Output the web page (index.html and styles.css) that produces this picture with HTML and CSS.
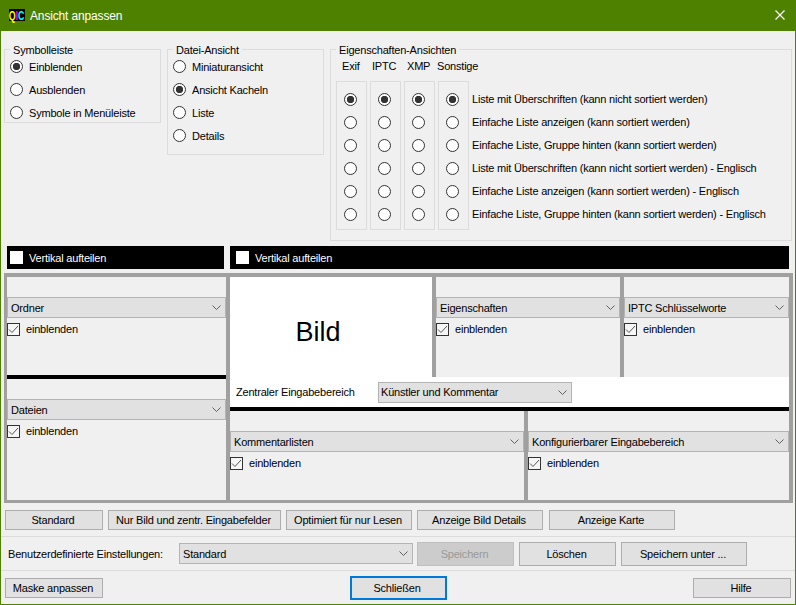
FILE: index.html
```html
<!DOCTYPE html>
<html lang="de">
<head>
    <meta charset="UTF-8">
    <meta name="viewport" content="width=device-width, initial-scale=1.0">
    <title>Ansicht anpassen</title>
    <link rel="stylesheet" href="styles.css">
</head>
<body>
<div class="window">
    <div class="titlebar">
        <span class="logo"><span class="logo-text"><span class="q">Q</span><span class="i">I</span><span class="c">C</span></span></span>
        <span class="title">Ansicht anpassen</span>
        <svg class="close" width="10" height="10" viewBox="0 0 10 10"><path d="M0.5 0.5L9.5 9.5M9.5 0.5L0.5 9.5" stroke="#fff" stroke-width="1.2" fill="none"/></svg>
    </div>

    <div class="views">
        <fieldset class="group group-toolbar">
            <legend>Symbolleiste</legend>
            <label class="opt"><input type="radio" name="tb" checked>Einblenden</label>
            <label class="opt"><input type="radio" name="tb">Ausblenden</label>
            <label class="opt"><input type="radio" name="tb">Symbole in Menüleiste</label>
        </fieldset>
        <fieldset class="group group-files">
            <legend>Datei-Ansicht</legend>
            <label class="opt"><input type="radio" name="fv">Miniaturansicht</label>
            <label class="opt"><input type="radio" name="fv" checked>Ansicht Kacheln</label>
            <label class="opt"><input type="radio" name="fv">Liste</label>
            <label class="opt"><input type="radio" name="fv">Details</label>
        </fieldset>
        <fieldset class="group group-props">
            <legend>Eigenschaften-Ansichten</legend>
            <div class="prop-heads">
                <span class="head-exif">Exif</span>
                <span class="head-iptc">IPTC</span>
                <span class="head-xmp">XMP</span>
                <span>Sonstige</span>
            </div>
            <div class="prop-table">
                <div class="prop-col">
                    <input type="radio" name="exif" checked><input type="radio" name="exif"><input type="radio" name="exif"><input type="radio" name="exif"><input type="radio" name="exif"><input type="radio" name="exif">
                </div>
                <div class="prop-col">
                    <input type="radio" name="iptc" checked><input type="radio" name="iptc"><input type="radio" name="iptc"><input type="radio" name="iptc"><input type="radio" name="iptc"><input type="radio" name="iptc">
                </div>
                <div class="prop-col">
                    <input type="radio" name="xmp" checked><input type="radio" name="xmp"><input type="radio" name="xmp"><input type="radio" name="xmp"><input type="radio" name="xmp"><input type="radio" name="xmp">
                </div>
                <div class="prop-col">
                    <input type="radio" name="other" checked><input type="radio" name="other"><input type="radio" name="other"><input type="radio" name="other"><input type="radio" name="other"><input type="radio" name="other">
                </div>
                <div class="prop-labels">
                    <span>Liste mit Überschriften (kann nicht sortiert werden)</span>
                    <span>Einfache Liste anzeigen (kann sortiert werden)</span>
                    <span>Einfache Liste, Gruppe hinten (kann sortiert werden)</span>
                    <span>Liste mit Überschriften (kann nicht sortiert werden) - Englisch</span>
                    <span>Einfache Liste anzeigen (kann sortiert werden) - Englisch</span>
                    <span>Einfache Liste, Gruppe hinten (kann sortiert werden) - Englisch</span>
                </div>
            </div>
        </fieldset>
    </div>

    <div class="split-bars">
        <label class="split split-left"><span class="split-box"></span>Vertikal aufteilen</label>
        <label class="split split-right"><span class="split-box"></span>Vertikal aufteilen</label>
    </div>

    <div class="layout">
        <div class="col-left">
            <div class="panel panel-ordner">
                <div class="combo"><span>Ordner</span><svg class="chev" width="9" height="5" viewBox="0 0 9 5"><path d="M0.5 0.5L4.5 4.5L8.5 0.5" stroke="#606060" fill="none"/></svg></div>
                <label class="show"><span class="check"><svg width="11" height="11" viewBox="0 0 11 11"><path d="M1 5.5L4 8.5L10 2" stroke="#555" fill="none"/></svg></span>einblenden</label>
            </div>
            <div class="rule"></div>
            <div class="panel panel-grow">
                <div class="combo"><span>Dateien</span><svg class="chev" width="9" height="5" viewBox="0 0 9 5"><path d="M0.5 0.5L4.5 4.5L8.5 0.5" stroke="#606060" fill="none"/></svg></div>
                <label class="show"><span class="check"><svg width="11" height="11" viewBox="0 0 11 11"><path d="M1 5.5L4 8.5L10 2" stroke="#555" fill="none"/></svg></span>einblenden</label>
            </div>
        </div>
        <div class="col-main">
            <div class="upper">
                <div class="upper-row">
                    <div class="picture">Bild</div>
                    <div class="panel panel-props">
                        <div class="combo"><span>Eigenschaften</span><svg class="chev" width="9" height="5" viewBox="0 0 9 5"><path d="M0.5 0.5L4.5 4.5L8.5 0.5" stroke="#606060" fill="none"/></svg></div>
                        <label class="show"><span class="check"><svg width="11" height="11" viewBox="0 0 11 11"><path d="M1 5.5L4 8.5L10 2" stroke="#555" fill="none"/></svg></span>einblenden</label>
                    </div>
                    <div class="panel panel-grow">
                        <div class="combo"><span>IPTC Schlüsselworte</span><svg class="chev" width="9" height="5" viewBox="0 0 9 5"><path d="M0.5 0.5L4.5 4.5L8.5 0.5" stroke="#606060" fill="none"/></svg></div>
                        <label class="show"><span class="check"><svg width="11" height="11" viewBox="0 0 11 11"><path d="M1 5.5L4 8.5L10 2" stroke="#555" fill="none"/></svg></span>einblenden</label>
                    </div>
                </div>
                <div class="central">
                    <span class="central-label">Zentraler Eingabebereich</span>
                    <div class="combo combo-central"><span>Künstler und Kommentar</span><svg class="chev" width="9" height="5" viewBox="0 0 9 5"><path d="M0.5 0.5L4.5 4.5L8.5 0.5" stroke="#606060" fill="none"/></svg></div>
                </div>
            </div>
            <div class="rule"></div>
            <div class="lower">
                <div class="panel panel-comments">
                    <div class="combo"><span>Kommentarlisten</span><svg class="chev" width="9" height="5" viewBox="0 0 9 5"><path d="M0.5 0.5L4.5 4.5L8.5 0.5" stroke="#606060" fill="none"/></svg></div>
                    <label class="show"><span class="check"><svg width="11" height="11" viewBox="0 0 11 11"><path d="M1 5.5L4 8.5L10 2" stroke="#555" fill="none"/></svg></span>einblenden</label>
                </div>
                <div class="panel panel-grow">
                    <div class="combo"><span>Konfigurierbarer Eingabebereich</span><svg class="chev" width="9" height="5" viewBox="0 0 9 5"><path d="M0.5 0.5L4.5 4.5L8.5 0.5" stroke="#606060" fill="none"/></svg></div>
                    <label class="show"><span class="check"><svg width="11" height="11" viewBox="0 0 11 11"><path d="M1 5.5L4 8.5L10 2" stroke="#555" fill="none"/></svg></span>einblenden</label>
                </div>
            </div>
        </div>
    </div>

    <div class="presets">
        <button class="btn btn-s">Standard</button>
        <button class="btn btn-l">Nur Bild und zentr. Eingabefelder</button>
        <button class="btn btn-m">Optimiert für nur Lesen</button>
        <button class="btn btn-m">Anzeige Bild Details</button>
        <button class="btn btn-m btn-last">Anzeige Karte</button>
    </div>

    <div class="custom">
        <span class="custom-label">Benutzerdefinierte Einstellungen:</span>
        <div class="combo combo-custom"><span>Standard</span><svg class="chev" width="9" height="5" viewBox="0 0 9 5"><path d="M0.5 0.5L4.5 4.5L8.5 0.5" stroke="#606060" fill="none"/></svg></div>
        <button class="btn btn-s btn-tall" disabled>Speichern</button>
        <button class="btn btn-s btn-tall">Löschen</button>
        <button class="btn btn-m btn-tall">Speichern unter ...</button>
    </div>

    <div class="footer">
        <button class="btn btn-s">Maske anpassen</button>
        <button class="btn btn-s btn-close">Schließen</button>
        <button class="btn btn-s">Hilfe</button>
    </div>
</div>
</body>
</html>
```

FILE: styles.css
```css
html, body {
    margin: 0;
    padding: 0;
}

body {
    font-family: "Liberation Sans", Arial, sans-serif;
    font-size: 11px;
    letter-spacing: -0.2px;
    color: #000;
    background-color: #f0f0f0;
}

.window {
    width: 796px;
    height: 605px;
    box-sizing: border-box;
    border: 1px solid #4f8100;
    display: flex;
    flex-direction: column;
    background-color: #f0f0f0;
    overflow: hidden;
}

/* title bar */
.titlebar {
    height: 30px;
    flex: none;
    background-color: #4f8100;
    display: flex;
    align-items: center;
    padding: 0 10px 0 8px;
    color: #fff;
}

.logo {
    width: 16px;
    height: 12px;
    margin: 0 5px 2px 0;
    background-color: #000;
    display: flex;
    justify-content: center;
    align-items: center;
    font-weight: bold;
    font-size: 13px;
    letter-spacing: 0;
}

.logo-text {
    flex: none;
    transform: scaleX(0.68);
}

.logo .q { color: #ffff00; }
.logo .i { color: #ff00ff; }
.logo .c { color: #00ffff; }

.title {
    font-size: 12px;
    letter-spacing: -0.15px;
    flex: 1;
}

.close {
    margin-bottom: 2px;
}

/* radio buttons */
input[type="radio"] {
    appearance: none;
    -webkit-appearance: none;
    width: 13px;
    height: 13px;
    margin: 0;
    flex: none;
    border: 1px solid #333;
    border-radius: 50%;
    background-color: #fff;
    box-sizing: border-box;
}

input[type="radio"]:checked {
    background: radial-gradient(circle, #333 0, #333 3.4px, #fff 4px);
}

/* top groups */
.views {
    height: 215px;
    flex: none;
    box-sizing: border-box;
    padding: 11px 0 0 3px;
    display: flex;
    align-items: flex-start;
    gap: 6px;
}

.group {
    margin: 0;
    padding: 0;
    border: 1px solid #dcdcdc;
    box-sizing: border-box;
}

.group legend {
    padding: 0 3px;
    height: 15px;
    line-height: 17px;
}

.group-toolbar,
.group-files {
    width: 157px;
    padding-left: 5px;
}

.group-toolbar { height: 81px; }
.group-files { height: 113px; }

.group-props {
    width: 462px;
    height: 199px;
    padding-left: 5px;
}

.opt {
    display: flex;
    align-items: center;
    height: 23px;
    gap: 6px;
}

.opt:first-of-type {
    margin-top: -2px;
}

.prop-heads {
    display: flex;
    height: 18px;
    align-items: center;
    padding-left: 6px;
    margin-bottom: 6px;
}

.prop-heads .head-exif { width: 30px; }
.prop-heads .head-iptc { width: 35px; }
.prop-heads .head-xmp { width: 30px; }

.prop-table {
    display: flex;
    gap: 3px;
}

.prop-col {
    width: 31px;
    height: 149px;
    box-sizing: border-box;
    border: 1px solid #dcdcdc;
    padding: 11px 0 0 7px;
    display: flex;
    flex-direction: column;
    align-items: flex-start;
    gap: 10px;
}

.prop-labels {
    display: flex;
    flex-direction: column;
    padding-top: 7px;
}

.prop-labels span {
    height: 23px;
    line-height: 23px;
}

/* black bars */
.split-bars {
    height: 27px;
    flex: none;
    display: flex;
    padding-left: 6px;
    gap: 6px;
}

.split {
    height: 23px;
    background-color: #000;
    color: #fff;
    display: flex;
    align-items: center;
    padding-left: 3px;
    box-sizing: border-box;
    gap: 6px;
}

.split-left { width: 217px; }
.split-right { width: 559px; padding-left: 6px; }

.split-box {
    width: 13px;
    height: 13px;
    background-color: #fff;
}

/* layout frame */
.layout {
    width: 789px;
    height: 230px;
    flex: none;
    margin-left: 3px;
    box-sizing: border-box;
    padding: 4px 4px 3px 3px;
    background-color: #a0a0a0;
    display: flex;
    gap: 4px;
}

.col-left {
    width: 219px;
    display: flex;
    flex-direction: column;
}

.col-main {
    width: 559px;
    display: flex;
    flex-direction: column;
}

.rule {
    height: 4px;
    flex: none;
    background-color: #000;
}

.panel {
    background-color: #f0f0f0;
    padding-top: 20px;
    box-sizing: border-box;
}

.panel-ordner { height: 98px; }
.panel-grow { flex: 1; min-width: 0; }
.panel-props { width: 184px; }
.panel-comments { width: 294px; }

.combo {
    height: 21px;
    box-sizing: border-box;
    border: 1px solid #b4b4b4;
    background-color: #e1e1e1;
    display: flex;
    align-items: center;
    justify-content: space-between;
    padding: 0 4px 0 3px;
}

.chev { flex: none; }

.show {
    display: flex;
    align-items: flex-start;
    gap: 6px;
    height: 13px;
    line-height: 12px;
    margin-top: 5px;
}

.check {
    width: 13px;
    height: 13px;
    box-sizing: border-box;
    border: 1px solid #333;
    background-color: #f6f6f6;
    display: flex;
}

/* centre area */
.upper {
    height: 130px;
    flex: none;
    background-color: #fff;
}

.upper-row {
    height: 100px;
    display: flex;
    gap: 4px;
    background-color: #a0a0a0;
}

.picture {
    width: 202px;
    background-color: #fff;
    font-size: 27px;
    letter-spacing: 0;
    display: flex;
    align-items: center;
    justify-content: center;
    padding: 10px 26px 0 0;
    box-sizing: border-box;
}

.central {
    height: 30px;
    display: flex;
    align-items: center;
    padding-left: 6px;
}

.central-label { width: 142px; }
.combo-central { width: 194px; padding-left: 2px; }

.lower {
    flex: 1;
    display: flex;
    gap: 4px;
}

/* bottom rows */
.btn {
    height: 20px;
    padding: 0 2px 0 0;
    box-sizing: border-box;
    border: 1px solid #adadad;
    background-color: #e1e1e1;
    color: #000;
    font-family: inherit;
    font-size: inherit;
    letter-spacing: inherit;
}

.btn-s { width: 98px; }
.btn-m { width: 126px; }
.btn-l { width: 173px; }
.btn-last { margin-left: 1px; }
.btn-tall { height: 24px; }

.btn:disabled {
    background-color: #cccccc;
    border-color: #bfbfbf;
    color: #999;
}

.presets {
    height: 34px;
    flex: none;
    box-sizing: border-box;
    padding: 7px 0 0 4px;
    display: flex;
    align-items: flex-start;
    gap: 5px;
    border-bottom: 1px solid #dcdcdc;
}

.custom {
    height: 34px;
    flex: none;
    box-sizing: border-box;
    display: flex;
    align-items: center;
    padding-left: 7px;
    gap: 5px;
    border-bottom: 1px solid #dcdcdc;
}

.custom .btn-s { width: 97px; }
.custom-label { width: 166px; }
.combo-custom { width: 234px; margin-right: -1px; }

.footer {
    flex: 1;
    display: flex;
    align-items: center;
    justify-content: space-between;
    padding: 0 4px;
}

.btn-close {
    width: 97px;
    height: 24px;
    border: 2px solid #0078d7;
}
```
